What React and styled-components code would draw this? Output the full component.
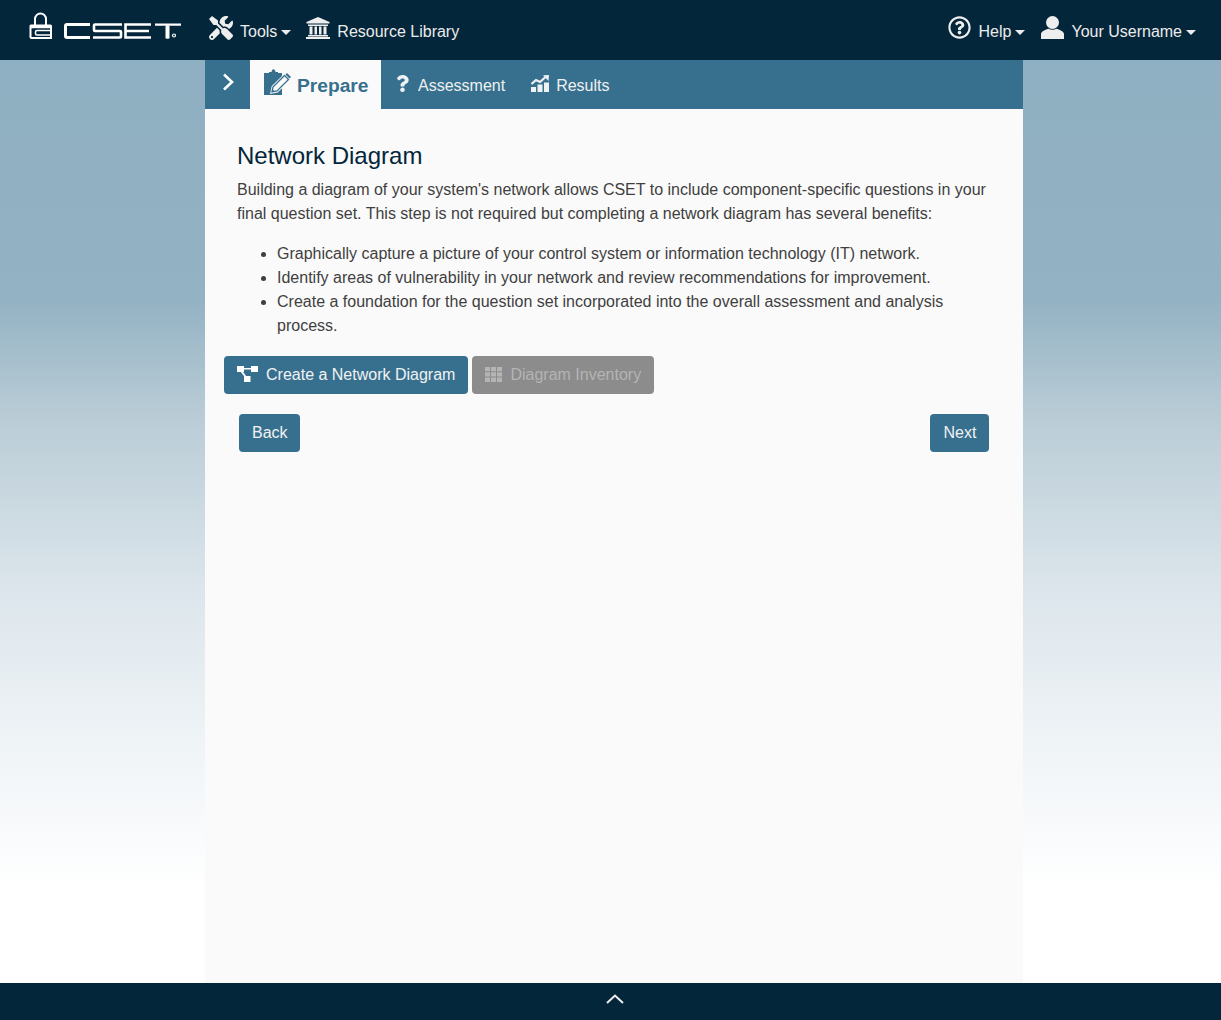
import styled, { createGlobalStyle } from "styled-components";
import { FaTools, FaRegQuestionCircle, FaQuestion } from "react-icons/fa";

const Global = createGlobalStyle`
  html, body { margin: 0; padding: 0; height: 100%; }
  body { font-family: "Liberation Sans", Arial, sans-serif; font-size: 16px; color: #3f3f3f; }
  * { box-sizing: border-box; }
`;

const Page = styled.div`
  height: 100vh;
  display: flex;
  flex-direction: column;
  overflow: hidden;
`;

const TopBar = styled.header`
  height: 60px;
  flex: none;
  background: #04263a;
  color: #ececec;
  display: flex;
  align-items: center;
  padding: 0 25px 0 29px;
`;

const Logo = styled.svg`
  width: 153px;
  height: 28px;
  margin-right: 27px;
  margin-bottom: 8px;
  flex: none;
  color: #fff;
`;

const NavItem = styled.div`
  display: flex;
  align-items: center;
  padding-top: 4px;
  margin-right: ${(p) => p.$gap || 0}px;
  white-space: nowrap;
`;

const NavIcon = styled.span`
  display: flex;
  margin-right: ${(p) => p.$gap}px;
  margin-top: -9px;
  color: #eee;
  font-size: ${(p) => p.$size}px;
`;

const Caret = styled.span`
  display: inline-block;
  width: 0;
  height: 0;
  margin-left: 4px;
  border-top: 5px solid currentColor;
  border-left: 5px solid transparent;
  border-right: 5px solid transparent;
`;

const Spacer = styled.div`
  flex: 1;
`;

const Body = styled.main`
  flex: 1;
  min-height: 0;
  padding-left: 205px;
  background: linear-gradient(180deg, #8fb0c2 0%, #93b2c3 26%, #b9ccd6 38.5%, #dde6ec 58%, #eef3f6 73%, #fff 90%, #fff 100%);
`;

const Panel = styled.div`
  width: 818px;
  height: 100%;
  background: #fafafa;
  display: flex;
  flex-direction: column;
`;

const Tabs = styled.nav`
  height: 49px;
  flex: none;
  background: #37708f;
  display: flex;
  color: #f0f0f0;
`;

const Toggle = styled.div`
  width: 45px;
  display: flex;
  justify-content: center;
  align-items: flex-start;
  padding-top: 13px;
`;

const ActiveTab = styled.div`
  width: 131px;
  background: #fafafa;
  color: #37708f;
  font-size: 19.2px;
  font-weight: 700;
  display: flex;
  align-items: center;
  padding: 3px 0 0 14px;
  svg { margin-right: 6px; margin-top: -9px; flex: none; }
`;

const Tab = styled.div`
  display: flex;
  align-items: center;
  padding: 2px 0 0 ${(p) => p.$left}px;
  svg { margin-right: ${(p) => p.$gap}px; margin-top: -4px; flex: none; }
`;

const Content = styled.section`
  padding: 32px 19px 0 19px;
`;

const Title = styled.h2`
  margin: 0 0 8px 13px;
  font-size: 24px;
  line-height: 29px;
  font-weight: 400;
  color: #04263a;
`;

const Para = styled.p`
  margin: 0 0 16px 13px;
  line-height: 24px;
`;

const List = styled.ul`
  margin: 0 30px 18px 13px;
  padding-left: 40px;
  line-height: 24px;
`;

const ButtonRow = styled.div`
  display: flex;
  gap: 4px;
`;

const Button = styled.div`
  height: 38px;
  display: inline-flex;
  align-items: center;
  justify-content: center;
  padding: 0 13px;
  border-radius: 4px;
  background: ${(p) => (p.$disabled ? "#8c8c8c" : "#37708f")};
  color: ${(p) => (p.$disabled ? "#b4b4b4" : "#f2f2f2")};
  svg { margin-right: 8px; margin-top: -2px; flex: none; }
`;

const StepButton = styled(Button)`
  min-width: 59px;
  padding: 0 12px 0 13px;
`;

const NavRow = styled.div`
  display: flex;
  justify-content: space-between;
  margin: 20px 15px 0;
`;

const Footer = styled.footer`
  height: 37px;
  flex: none;
  background: #04263a;
  display: flex;
  justify-content: center;
  align-items: flex-start;
  padding-top: 11px;
  padding-left: 8px;
`;

const CsetLogo = () => (
  <Logo viewBox="0 0 153 28" fill="none" stroke="currentColor">
    <path d="M6 13V7a5.500 5.500 0 0 1 11 0v6" strokeWidth="2" />
    <path d="M2 13.500h19.500a.5.5 0 0 1 .5.5v12H2.500a1 1 0 0 1-1-1V14z" strokeWidth="2" />
    <path d="M1 15h21" strokeWidth="2.500" />
    <path d="M22 18.500H8a1.500 1.500 0 0 0-1.500 1.500v1.500A1.500 1.500 0 0 0 8 23h14" strokeWidth="1.500" />
    <path d="M61 12.500H38a1.500 1.500 0 0 0-1.500 1.500v10a1.500 1.500 0 0 0 1.500 1.500h23" strokeWidth="3" />
    <path d="M93 12.500H66a1 1 0 0 0-1 1V18a1 1 0 0 0 1 1h25a1 1 0 0 1 1 1v4.500a1 1 0 0 1-1 1H64" strokeWidth="2.600" />
    <path d="M122 12.500H96.500v13H122M96.500 19H120" strokeWidth="2.600" />
    <path d="M126 12.700h26M138.500 12.700V26.500" strokeWidth="2.200" />
    <path d="M138.500 14V26.500" strokeWidth="4" />
    <circle cx="145" cy="23.500" r="1.500" strokeWidth="1.200" />
  </Logo>
);

const LibraryIcon = () => (
  <svg width="24" height="22" viewBox="0 0 24 22" fill="currentColor">
    <path d="M12 0 23.500 5v1.500H.5V5z" />
    <path d="M2 7.500h20V9H2zM3.500 9.500h3v8h-3zM8.500 9.500h2.500v8H8.500zM13 9.500h2.500v8H13zM17.500 9.500h3v8h-3zM2 18h20v1.500H2zM0 20h24v2H0z" />
  </svg>
);

const UserIcon = () => (
  <svg width="23" height="23" viewBox="0 0 23 23" fill="currentColor">
    <circle cx="11.500" cy="6.500" r="6.500" />
    <path d="M0 23v-5c0-2.800 5-4.500 7.500-5.300 2.500 1.300 5.500 1.300 8 0C18 13.500 23 15.200 23 18v5z" />
  </svg>
);

const ChevronRight = () => (
  <svg width="12" height="18" viewBox="0 0 12 18" fill="none" stroke="#fff" strokeWidth="2.600">
    <path d="M2 1.500 10 9l-8 7.500" />
  </svg>
);

const ChevronUp = () => (
  <svg width="18" height="10" viewBox="0 0 18 10" fill="none" stroke="#eee" strokeWidth="2">
    <path d="M1 9l8-7.500L17 9" />
  </svg>
);

const PrepareIcon = () => (
  <svg width="27" height="26" viewBox="0 0 27 26">
    <path fill="#37708f" d="M0 4h18v22H0z" />
    <path fill="#37708f" d="M5 3h2.500C7.800 1.200 8.500.3 9.500.3s1.700.9 2 2.700H14v3H5z" />
    <path fill="#fafafa" stroke="#fafafa" strokeWidth="3" d="M8 23l1-5L20.500 6.500l4 4L13 22z" />
    <path fill="#fafafa" stroke="#37708f" strokeWidth="1.300" d="M8 23l1-5L20.500 6.500l4 4L13 22z" />
    <path fill="#37708f" d="M8 23l.5-2.800 2.300 2.200zM21.500 5.500 23 4l4 4-1.500 1.500z" />
  </svg>
);

const ResultsIcon = () => (
  <svg width="18" height="17" viewBox="0 0 18 17">
    <path fill="#eef2f4" d="M0 12h5v5H0zM6.500 9.500h5V17h-5zM13 7.500h5V17h-5z" />
    <path fill="none" stroke="#eef2f4" strokeWidth="2.200" d="M.5 9 5 5l4 2 5.500-5" />
    <path fill="#eef2f4" d="M12 .3 18 0l-.5 6z" />
  </svg>
);

const NetworkIcon = () => (
  <svg width="21" height="16" viewBox="0 0 21 16" fill="#fff">
    <path d="M0 0h7v6H0zM14 0h7v6h-7zM7 10h6.500v6H7z" />
    <path d="M6 2h9v1.500H6zM3.500 5.500 5 4.500 9.500 10.500 8 11.500z" />
  </svg>
);

const GridIcon = () => (
  <svg width="17" height="15" viewBox="0 0 17 15" fill="#b4b4b4">
    <path d="M0 0h5v4.300H0zM6 0h5v4.300H6zM12 0h5v4.300h-5zM0 5.300h5v4.300H0zM6 5.300h5v4.300H6zM12 5.300h5v4.300h-5zM0 10.600h5V15H0zM6 10.600h5V15H6zM12 10.600h5V15h-5z" />
  </svg>
);

export default function App() {
  return (
    <Page>
      <Global />
      <TopBar>
        <CsetLogo />
        <NavItem $gap={15}>
          <NavIcon $size={24} $gap={7}><FaTools /></NavIcon>
          Tools<Caret />
        </NavItem>
        <NavItem>
          <NavIcon $size={24} $gap={7}><LibraryIcon /></NavIcon>
          Resource Library
        </NavItem>
        <Spacer />
        <NavItem $gap={16}>
          <NavIcon $size={23} $gap={8}><FaRegQuestionCircle /></NavIcon>
          Help<Caret />
        </NavItem>
        <NavItem>
          <NavIcon $size={23} $gap={7}><UserIcon /></NavIcon>
          Your Username<Caret />
        </NavItem>
      </TopBar>
      <Body>
        <Panel>
          <Tabs>
            <Toggle><ChevronRight /></Toggle>
            <ActiveTab><PrepareIcon />Prepare</ActiveTab>
            <Tab $left={13} $gap={7}><FaQuestion size={17} color="#eef2f4" />Assessment</Tab>
            <Tab $left={26} $gap={7}><ResultsIcon />Results</Tab>
          </Tabs>
          <Content>
            <Title>Network Diagram</Title>
            <Para>
              Building a diagram of your system's network allows CSET to include component-specific questions in your
              final question set. This step is not required but completing a network diagram has several benefits:
            </Para>
            <List>
              <li>Graphically capture a picture of your control system or information technology (IT) network.</li>
              <li>Identify areas of vulnerability in your network and review recommendations for improvement.</li>
              <li>Create a foundation for the question set incorporated into the overall assessment and analysis process.</li>
            </List>
            <ButtonRow>
              <Button><NetworkIcon />Create a Network Diagram</Button>
              <Button $disabled><GridIcon />Diagram Inventory</Button>
            </ButtonRow>
            <NavRow>
              <StepButton>Back</StepButton>
              <StepButton>Next</StepButton>
            </NavRow>
          </Content>
        </Panel>
      </Body>
      <Footer><ChevronUp /></Footer>
    </Page>
  );
}
